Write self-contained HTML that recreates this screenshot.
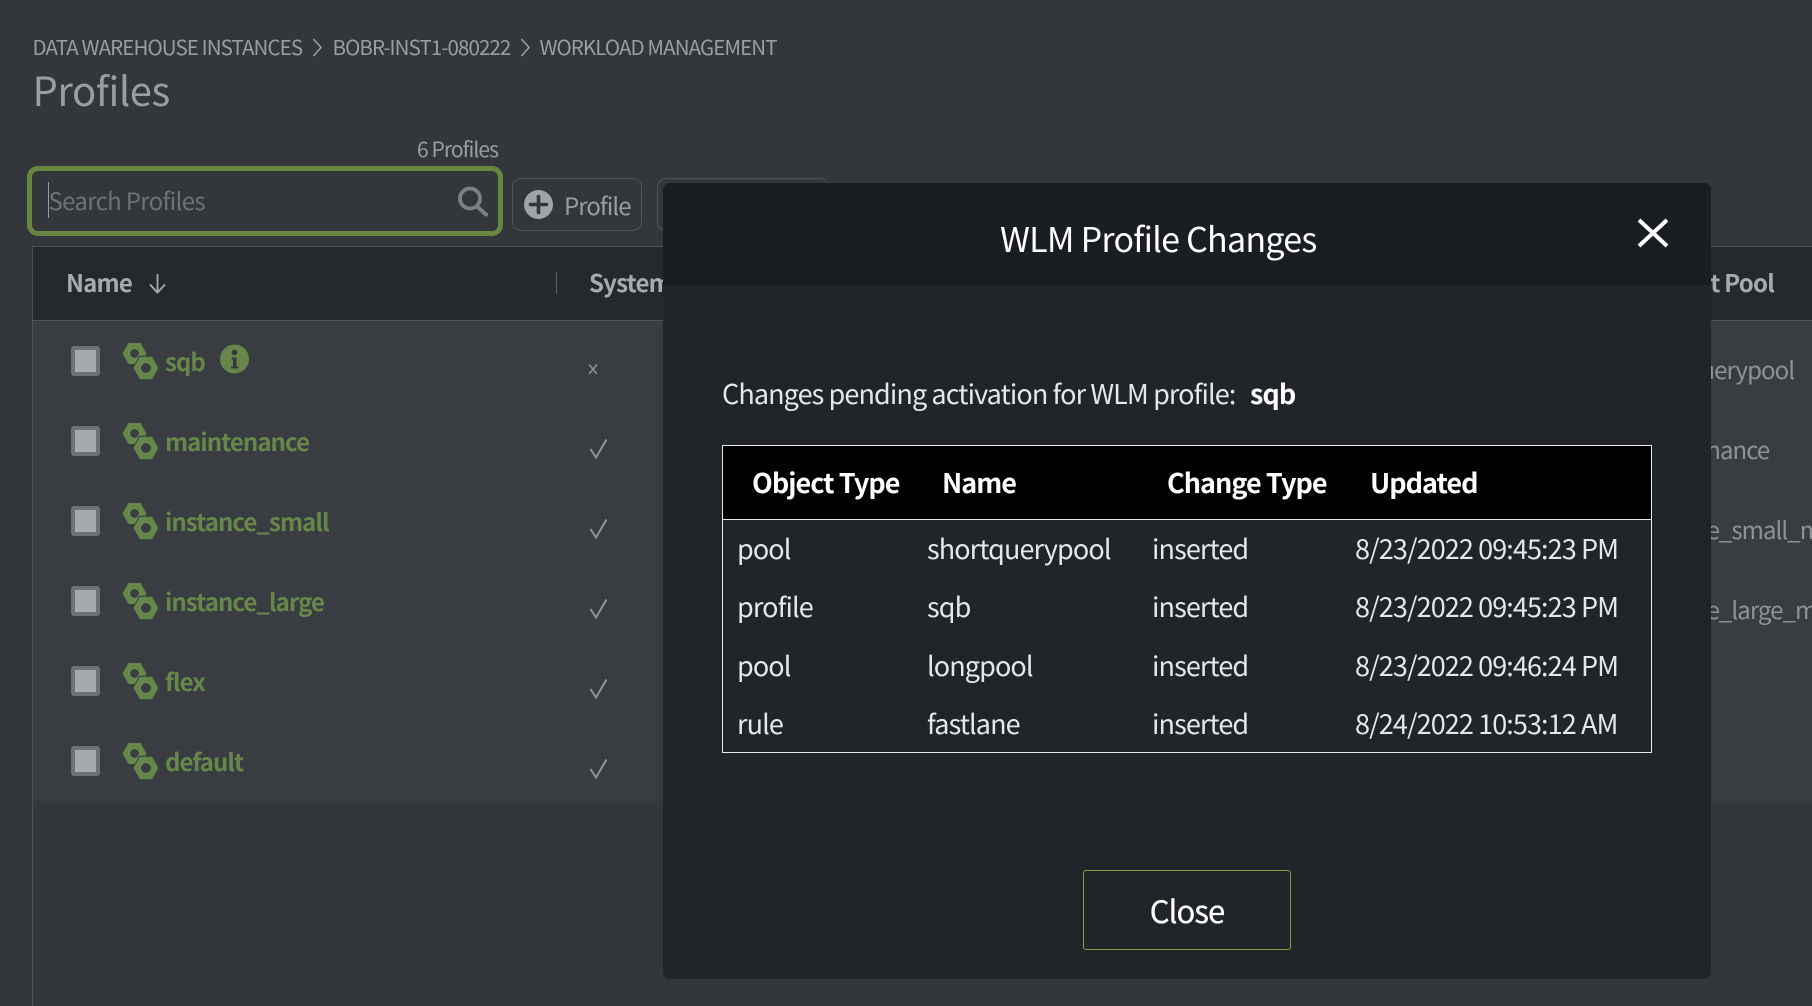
<!DOCTYPE html>
<html><head><meta charset="utf-8"><title>Profiles</title>
<style>
html,body{margin:0;padding:0;width:1812px;height:1006px;overflow:hidden;background:#33373b}
body{position:relative;font-family:"Noto Sans CJK JP","Liberation Sans",sans-serif;color:#9a9ea2}
.a{position:absolute;white-space:nowrap}
.t{position:absolute;white-space:nowrap;line-height:40px;height:40px}
.g{color:#67864a;font-weight:700;font-size:24px;left:165px;letter-spacing:-.95px}
.h{font-weight:700;font-size:24px;color:#a7abae;letter-spacing:-.8px}
.r{font-size:24px;color:#8f9397;letter-spacing:-.95px}
.m{font-size:27px;color:#e6e7e8;letter-spacing:-.9px}
.b{font-size:27px;color:#fff;font-weight:700;letter-spacing:-.97px}
</style></head><body>
<div class="a" style="left:33px;top:321px;width:1779px;height:480px;background:#393d41"></div>
<div class="a" style="left:32px;top:246px;width:1px;height:760px;background:#4c5154"></div>
<div class="a" style="left:33px;top:246px;width:1779px;height:75px;background:#25292c;border-top:1px solid #4f5457;border-bottom:1px solid #4f5457;box-sizing:border-box"></div>
<div class="a" style="left:556px;top:272px;width:1px;height:22px;background:#5c6064"></div>

<div class="t" style="left:32.5px;top:26px;font-size:20.5px;letter-spacing:-.9px">DATA WAREHOUSE INSTANCES</div>
<div class="t" style="left:332.5px;top:26px;font-size:20.5px;letter-spacing:-.9px">BOBR-INST1-080222</div>
<div class="t" style="left:539.5px;top:26px;font-size:20.5px;letter-spacing:-.9px">WORKLOAD MANAGEMENT</div>
<div class="t" style="left:32.5px;top:69px;font-size:40px;letter-spacing:-.45px">Profiles</div>
<div class="t" style="left:417px;top:129px;font-size:21px;letter-spacing:-.93px">6 Profiles</div>

<div class="a" style="left:27px;top:166px;width:476px;height:70px;box-sizing:border-box;border:5px solid #68863f;border-radius:11px"></div>
<div class="a" style="left:48px;top:182px;width:1px;height:36px;background:#9a9ea2"></div>
<div class="t" style="left:48.5px;top:180px;font-size:24px;color:#6d7276;letter-spacing:-.67px">Search Profiles</div>

<div class="a" style="left:512px;top:178px;width:130px;height:53px;box-sizing:border-box;border:1px solid #4f5458;border-radius:9px"></div>
<div class="a" style="left:657px;top:178px;width:172px;height:53px;box-sizing:border-box;border:1px solid #4f5458;border-radius:9px"></div>
<div class="t" style="left:564px;top:184.5px;font-size:24px;letter-spacing:-.95px">Profile</div>

<div class="t h" style="left:66px;top:262px">Name</div>
<div class="t h" style="left:589px;top:262px">System</div>
<div class="t h" style="left:1500px;top:262px;width:274px;text-align:right">Default Pool</div>

<div class="t g" style="top:341px">sqb</div>
<div class="t g" style="top:421px">maintenance</div>
<div class="t g" style="top:501px">instance_small</div>
<div class="t g" style="top:581px">instance_large</div>
<div class="t g" style="top:661px">flex</div>
<div class="t g" style="top:741px">default</div>

<div class="t r" style="left:1633px;top:348.5px">shortquerypool</div>
<div class="t r" style="left:1633px;top:428.5px">maintenance</div>
<div class="t r" style="left:1633px;top:508.5px;width:179px;overflow:hidden">instance_small_max</div>
<div class="t r" style="left:1633px;top:588.5px;width:179px;overflow:hidden">instance_large_max</div>

<svg class="a" style="left:0;top:0" width="1812" height="1006" viewBox="0 0 1812 1006">
<defs>
<g id="nut">
<path fill="#67864a" fill-rule="evenodd" d="M122.500 353.500L128.500 343H140.500L146.500 353.500L140.500 364H128.500ZM134.500 349.200a4.300 4.300 0 1 0 .01 0Z"/>
<path fill="#67864a" stroke="#393d41" stroke-width="1" fill-rule="evenodd" d="M133 368L139.700 356.200H152.300L159 368L152.300 379.800H139.700ZM146 363.700a4.300 4.300 0 1 0 .01 0Z"/>
</g>
<g id="cb">
<rect x="71" y="346" width="29" height="30" rx="3" fill="#6e7276"/>
<rect x="75" y="350" width="21" height="22" fill="#a6aaad"/>
</g>
<path id="ck" d="M590.500 449L596 457.500L606.500 439.500" fill="none" stroke="#8f9397" stroke-width="2"/>
</defs>
<use href="#nut"/><use href="#nut" y="80"/><use href="#nut" y="160"/><use href="#nut" y="240"/><use href="#nut" y="320"/><use href="#nut" y="400"/>
<use href="#cb"/><use href="#cb" y="80"/><use href="#cb" y="160"/><use href="#cb" y="240"/><use href="#cb" y="320"/><use href="#cb" y="400"/>
<use href="#ck"/><use href="#ck" y="80"/><use href="#ck" y="160"/><use href="#ck" y="240"/><use href="#ck" y="320"/>
<path d="M589 364.500L597 374M597 364.500L589 374" stroke="#8f9397" stroke-width="1.500" fill="none"/>
<circle cx="234.500" cy="359" r="14.500" fill="#67864a"/>
<circle cx="234.500" cy="352.500" r="2.800" fill="#33373b"/>
<path d="M231.500 357.500H236.500V366.500H238.500V368.500H231V366.500H233V359.500H231.500Z" fill="#33373b"/>
<path d="M313.500 39L321 47.500L313.500 56M521.500 39L529 47.500L521.500 56" fill="none" stroke="#9a9ea2" stroke-width="1.600"/>
<circle cx="470" cy="198.500" r="10" fill="none" stroke="#7d8185" stroke-width="3.800"/>
<path d="M477 206.500L486 214.500" stroke="#7d8185" stroke-width="4" stroke-linecap="round"/>
<circle cx="538.500" cy="204.500" r="14.500" fill="#a0a4a7"/>
<path d="M538.500 196.500V212.500M530.500 204.500H546.500" stroke="#33373b" stroke-width="3.600" stroke-linecap="round"/>
<path d="M157.500 274V292M150 284.500L157.500 292.500L165 284.500" fill="none" stroke="#a7abae" stroke-width="1.800"/>
</svg>

<div class="a" style="left:663px;top:183px;width:1048px;height:796px;background:#212529;border-radius:7px;overflow:hidden">
<div style="position:absolute;left:0;top:0;width:100%;height:102px;background:#1a1d21"></div>
</div>
<div class="t" style="left:1000px;top:218px;font-size:34px;line-height:40px;color:#fff;letter-spacing:-.74px">WLM Profile Changes</div>
<svg class="a" style="left:1635px;top:217px" width="36" height="32" viewBox="0 0 36 32"><path d="M4 3L32 29M32 3L4 29" stroke="#fff" stroke-width="4" fill="none"/></svg>
<div class="t m" style="left:722px;top:373px">Changes pending activation for WLM profile:</div>
<div class="t b" style="left:1250px;top:373px">sqb</div>

<div class="a" style="left:722px;top:445px;width:930px;height:308px;box-sizing:border-box;border:1.500px solid #e8e8e8"></div>
<div class="a" style="left:723px;top:446px;width:928px;height:73px;background:#000;border-bottom:1.500px solid #e8e8e8"></div>
<div class="t b" style="left:752px;top:462px">Object Type</div>
<div class="t b" style="left:942px;top:462px">Name</div>
<div class="t b" style="left:1167px;top:462px">Change Type</div>
<div class="t b" style="left:1370px;top:462px">Updated</div>

<div class="t m" style="left:737px;top:528px">pool</div><div class="t m" style="left:927px;top:528px">shortquerypool</div><div class="t m" style="left:1152px;top:528px">inserted</div><div class="t m" style="left:1355px;top:528px">8/23/2022 09:45:23 PM</div>
<div class="t m" style="left:737px;top:586px">profile</div><div class="t m" style="left:927px;top:586px">sqb</div><div class="t m" style="left:1152px;top:586px">inserted</div><div class="t m" style="left:1355px;top:586px">8/23/2022 09:45:23 PM</div>
<div class="t m" style="left:737px;top:644.5px">pool</div><div class="t m" style="left:927px;top:644.5px">longpool</div><div class="t m" style="left:1152px;top:644.5px">inserted</div><div class="t m" style="left:1355px;top:644.5px">8/23/2022 09:46:24 PM</div>
<div class="t m" style="left:737px;top:703px">rule</div><div class="t m" style="left:927px;top:703px">fastlane</div><div class="t m" style="left:1152px;top:703px">inserted</div><div class="t m" style="left:1355px;top:703px">8/24/2022 10:53:12 AM</div>

<div class="a" style="left:1083px;top:870px;width:208px;height:80px;box-sizing:border-box;border:1px solid #7ea23f;border-radius:3px"></div>
<div class="t" style="left:1083px;top:890px;width:208px;text-align:center;font-size:31px;color:#fff;letter-spacing:-.9px;-webkit-text-stroke:.3px #fff">Close</div>
</body></html>
